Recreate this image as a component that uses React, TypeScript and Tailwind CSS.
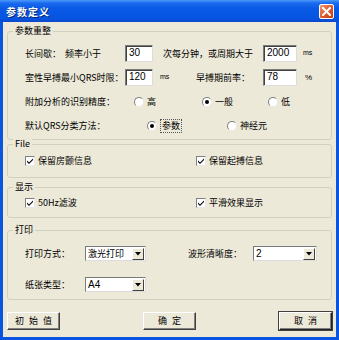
import type { ReactNode } from 'react';

const CJK = "font-['SimSun','Noto_Sans_CJK_SC',sans-serif]";

function Group({ title, className, children }: { title: string; className: string; children: ReactNode }) {
	return (
		<div className={`relative border border-[#d0d0bf] rounded-[3px] ${className}`}>
			<span className="absolute -top-[8px] left-[5px] bg-[#ece9d8] px-[2px] leading-[14px]">{title}</span>
			{children}
		</div>
	);
}

function Input({ value, w }: { value: string; w: string }) {
	return (
		<div
			className={`${w} h-[17px] bg-white border border-t-[#7a7a7a] border-l-[#7a7a7a] border-b-[#dcdcdc] border-r-[#dcdcdc] shadow-[inset_1px_1px_0_#404040] pl-[3px] pt-[1px] text-[10px] leading-[12px] font-['Liberation_Sans',sans-serif] text-black`}
		>
			{value}
		</div>
	);
}

function Radio({ label, checked, w, focus }: { label: string; checked?: boolean; w: string; focus?: boolean }) {
	return (
		<div className={`${w} flex items-center gap-[3px] whitespace-nowrap`}>
			<span className="w-[10px] h-[10px] rounded-full bg-white border border-t-[#808080] border-l-[#808080] border-b-[#e8e8e8] border-r-[#e8e8e8] flex items-center justify-center">
				{checked && <span className="w-[4px] h-[4px] rounded-full bg-black" />}
			</span>
			<span className={focus ? 'border border-dotted border-[#555] px-[1px] leading-[12px]' : 'leading-[14px]'}>{label}</span>
		</div>
	);
}

function Check({ label, w }: { label: string; w?: string }) {
	return (
		<div className={`${w ?? ''} flex items-center gap-[3px] whitespace-nowrap`}>
			<span className="w-[10px] h-[10px] bg-white border border-t-[#808080] border-l-[#808080] border-b-[#e8e8e8] border-r-[#e8e8e8] flex items-center justify-center">
				<svg width="8" height="8" viewBox="0 0 8 8">
					<path d="M1 3.5 L3 5.5 L7 1.5 L7 3 L3 7 L1 5 Z" fill="#000" />
				</svg>
			</span>
			<span className="leading-[14px]">{label}</span>
		</div>
	);
}

function Select({ value, w, latin }: { value: string; w: string; latin?: boolean }) {
	return (
		<div
			className={`${w} h-[15px] bg-white border border-t-[#7a7a7a] border-l-[#7a7a7a] border-b-[#dcdcdc] border-r-[#dcdcdc] flex items-center whitespace-nowrap`}
		>
			<span
				className={`flex-1 pl-[2px] leading-[13px] ${latin ? "font-['Liberation_Sans',sans-serif] text-[10px]" : ''}`}
			>
				{value}
			</span>
			<span className="w-[12px] h-[12px] mr-[1px] bg-[#ece9d8] border border-t-white border-l-white border-b-[#404040] border-r-[#404040] flex items-center justify-center">
				<svg width="6" height="4" viewBox="0 0 6 4">
					<path d="M0 0 H6 L3 3.5 Z" fill="#000" />
				</svg>
			</span>
		</div>
	);
}

function Button({ label, dark }: { label: string; dark?: boolean }) {
	return (
		<div
			className={`w-[53px] h-[18px] flex items-center justify-center whitespace-nowrap bg-[#ece9d8] border border-t-white border-l-white ${dark ? 'border-b-[#202020] border-r-[#202020] shadow-[inset_-1px_-1px_0_#808080,0_0_0_1px_#404040]' : 'border-b-[#404040] border-r-[#404040] shadow-[inset_-1px_-1px_0_#808080]'} tracking-[5px] pl-[5px] leading-[14px]`}
		>
			{label}
		</div>
	);
}

export default function App() {
	return (
		<div className={`w-[339px] h-[340px] flex flex-col bg-[#0a55e0] ${CJK} text-[9px] text-black`}>
			<div className="h-[22px] flex items-center justify-between pl-[6px] pr-[5px] bg-[linear-gradient(180deg,#4a9af8_0px,#1c6cf0_3px,#0a5ae6_8px,#0655e2_18px,#0a48cc_22px)]">
				<span className="text-white font-bold text-[10px] tracking-[1px] whitespace-nowrap [text-shadow:1px_1px_0_#0a246a]">参数定义</span>
				<span className="w-[15px] h-[15px] rounded-[2px] border border-white bg-[linear-gradient(135deg,#f29a7a,#e05a2a_50%,#c0401a)] flex items-center justify-center">
					<svg width="9" height="9" viewBox="0 0 9 9">
						<path d="M1 1 L8 8 M8 1 L1 8" stroke="#fff" strokeWidth="2" strokeLinecap="square" />
					</svg>
				</span>
			</div>

			<div className="flex-1 mx-[3px] mb-[3px] bg-[#ece9d8] flex flex-col px-[4px] pt-[9px] whitespace-nowrap">
				<Group title="参数重整" className="h-[109px] pt-[13px] pl-[17px] flex flex-col gap-[7px]">
					<div className="flex items-center h-[17px]">
						<span className="w-[40px]">长间歇：</span>
						<span className="w-[60px]">频率小于</span>
						<Input value="30" w="w-[28px]" />
						<span className="w-[110px] pl-[10px]">次每分钟，或周期大于</span>
						<Input value="2000" w="w-[34px]" />
						<span className="pl-[6px] text-[7px] font-['Liberation_Sans',sans-serif]">ms</span>
					</div>
					<div className="flex items-center h-[17px]">
						<span className="w-[100px]">室性早搏最小QRS时限：</span>
						<Input value="120" w="w-[28px]" />
						<span className="w-[43px] pl-[7px] text-[7px] font-['Liberation_Sans',sans-serif]">ms</span>
						<span className="w-[67px]">早搏期前率：</span>
						<Input value="78" w="w-[34px]" />
						<span className="pl-[8px] text-[8px] font-['Liberation_Sans',sans-serif]">%</span>
					</div>
					<div className="flex items-center h-[17px]">
						<span className="w-[109px]">附加分析的识别精度：</span>
						<Radio label="高" w="w-[68px]" />
						<Radio label="一般" w="w-[66px]" checked />
						<Radio label="低" w="w-[40px]" />
					</div>
					<div className="flex items-center h-[17px]">
						<span className="w-[122px]">默认QRS分类方法：</span>
						<Radio label="参数" w="w-[80px]" checked focus />
						<Radio label="神经元" w="w-[60px]" />
					</div>
				</Group>

				<Group title="File" className="mt-[4px] h-[34px] pl-[17px] flex items-center">
					<Check label="保留房颤信息" w="w-[171px]" />
					<Check label="保留起搏信息" />
				</Group>

				<Group title="显示" className="mt-[9px] h-[31px] pl-[17px] flex items-center">
					<Check label="50Hz滤波" w="w-[171px]" />
					<Check label="平滑效果显示" />
				</Group>

				<Group title="打印" className="mt-[12px] h-[70px] pt-[15px] pl-[17px] flex flex-col gap-[16px]">
					<div className="flex items-center h-[15px]">
						<span className="w-[60px]">打印方式：</span>
						<Select value="激光打印" w="w-[61px]" />
						<span className="ml-[42px] w-[65px]">波形清晰度：</span>
						<Select value="2" w="w-[64px]" latin />
					</div>
					<div className="flex items-center h-[15px]">
						<span className="w-[60px]">纸张类型：</span>
						<Select value="A4" w="w-[61px]" latin />
					</div>
				</Group>

				<div className="mt-[12px] flex justify-between">
					<Button label="初始值" />
					<Button label="确定" />
					<Button label="取消" dark />
				</div>
			</div>
		</div>
	);
}
